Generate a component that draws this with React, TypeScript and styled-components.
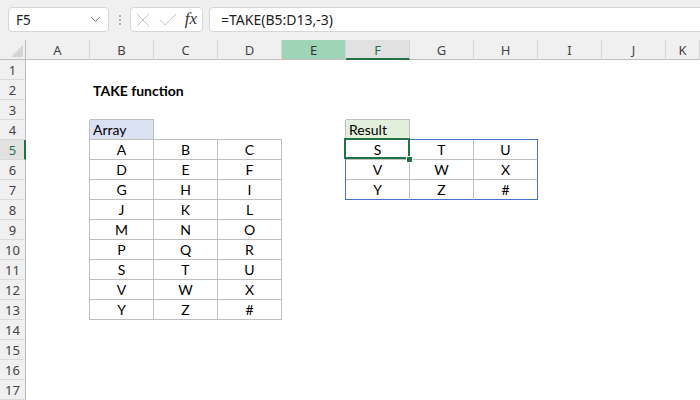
import React from 'react';
import styled, { createGlobalStyle, css } from 'styled-components';
import { ChevronDown, X, Check } from 'lucide-react';

const GREEN = '#217346';
const GRID = '#bfbfbf';
const BLUE = '#4472c4';
const HEAD_BG = '#f0f0f0';

const GlobalStyle = createGlobalStyle`
  html, body { margin: 0; padding: 0; background: #fff; overflow: hidden; }
  body { width: 700px; height: 400px; }
`;

const Window = styled.div`
  width: 700px;
  height: 400px;
  display: flex;
  flex-direction: column;
  overflow: hidden;
  background: #fff;
`;

const FormulaBar = styled.div`
  flex: none;
  height: 40px;
  box-sizing: border-box;
  padding: 7px 0 0 8px;
  display: flex;
  align-items: flex-start;
  background: ${HEAD_BG};
  font-family: "Noto Sans", "Open Sans", sans-serif;
  color: #222;
`;

const NameBox = styled.div`
  width: 101px;
  height: 25px;
  box-sizing: border-box;
  border: 1px solid #d6d6d6;
  border-radius: 4px;
  background: #fff;
  display: flex;
  align-items: center;
  justify-content: space-between;
  padding: 0 5px 0 7px;
  font-size: 13.5px;
`;

const Grip = styled.div`
  width: 21px;
  height: 25px;
  display: flex;
  flex-direction: column;
  align-items: center;
  justify-content: center;
  gap: 2px;
`;

const GripDot = styled.span`
  width: 2px;
  height: 2px;
  border-radius: 1px;
  background: #9a9a9a;
`;

const FxBox = styled.div`
  width: 73px;
  height: 25px;
  box-sizing: border-box;
  border: 1px solid #d6d6d6;
  border-radius: 4px;
  background: #fff;
  display: flex;
  align-items: center;
  padding: 0 5px 0 0;
  gap: 1px;
  color: #bdbdbd;

  & > svg {
    flex: none;
  }
`;

const FxLabel = styled.span`
  margin-left: auto;
  font-family: "Liberation Serif", "DejaVu Serif", serif;
  font-style: italic;
  font-size: 17px;
  color: #333;
  line-height: 1;
  padding-bottom: 2px;
`;

const FormulaInput = styled.div`
  flex: 1;
  height: 25px;
  margin-left: 6px;
  margin-right: -8px;
  box-sizing: border-box;
  border: 1px solid #d6d6d6;
  border-radius: 4px;
  background: #fff;
  display: flex;
  align-items: center;
  padding-left: 11px;
  font-size: 14px;
  white-space: nowrap;
`;

const Sheet = styled.div`
  flex: 1;
  display: grid;
  grid-template-columns: 26px repeat(10, 64px) 1fr;
  grid-auto-rows: 20px;
  font-family: Lato, "Open Sans", sans-serif;
`;

const Corner = styled.div`
  background: ${HEAD_BG};
  border-right: 1px solid #bdbdbd;
  border-bottom: 1px solid #bdbdbd;
  box-sizing: border-box;
  display: flex;
  align-items: flex-end;
  justify-content: flex-end;
  padding: 0 2px 2px 0;
`;

const CornerTriangle = styled.span`
  width: 0;
  height: 0;
  border-left: 12px solid transparent;
  border-bottom: 12px solid #d4d4d4;
`;

type HeadState = 'none' | 'active' | 'spill';

const ColHeader = styled.div<{ $state: HeadState }>`
  box-sizing: border-box;
  background: ${HEAD_BG};
  border-right: 1px solid #d6d6d6;
  border-bottom: 1px solid #bdbdbd;
  display: flex;
  align-items: center;
  justify-content: center;
  font-family: "Noto Sans", "Open Sans", sans-serif;
  font-size: 13px;
  color: #444;
  overflow: hidden;
  ${(p) =>
    p.$state === 'active' &&
    css`
      background: #e1e1e1;
      border-bottom: 2px solid ${GREEN};
      color: ${GREEN};
      padding-top: 1px;
    `}
  ${(p) =>
    p.$state === 'spill' &&
    css`
      background: #9fd5b7;
      color: #333;
    `}
`;

const RowHeader = styled.div<{ $active: boolean }>`
  box-sizing: border-box;
  background: ${HEAD_BG};
  border-right: 1px solid #bdbdbd;
  border-bottom: 1px solid #dadada;
  display: flex;
  align-items: center;
  justify-content: center;
  font-family: "Noto Sans", "Open Sans", sans-serif;
  font-size: 13px;
  color: #444;
  ${(p) =>
    p.$active &&
    css`
      background: #e1e1e1;
      border-right: 2px solid ${GREEN};
      color: ${GREEN};
      padding-left: 1px;
    `}
`;

const Cell = styled.div<{
  $fill?: string;
  $align?: 'left' | 'center';
  $bold?: boolean;
  $right?: string;
  $bottom?: string;
  $selected?: boolean;
}>`
  position: ${(p) => (p.$selected ? 'relative' : 'static')};
  box-sizing: border-box;
  min-width: 0;
  display: flex;
  align-items: center;
  justify-content: ${(p) => (p.$align === 'left' ? 'flex-start' : 'center')};
  padding: 0 3px;
  white-space: nowrap;
  overflow: visible;
  font-size: 14px;
  font-weight: ${(p) => (p.$bold ? 700 : 400)};
  color: #000;
  background: ${(p) => p.$fill ?? 'transparent'};
  border-right: ${(p) => (p.$right ? `1px solid ${p.$right}` : 'none')};
  border-bottom: ${(p) => (p.$bottom ? `1px solid ${p.$bottom}` : 'none')};
`;

const Selection = styled.span`
  position: absolute;
  top: -2px;
  left: -2px;
  right: -1px;
  bottom: 0;
  border: 2px solid ${GREEN};
  z-index: 2;
  pointer-events: none;
`;

const FillHandle = styled.span`
  position: absolute;
  right: -4px;
  bottom: -4px;
  width: 5px;
  height: 5px;
  background: ${GREEN};
  border: 1px solid #fff;
  z-index: 3;
`;

type Spec = {
  text?: string;
  fill?: string;
  align?: 'left' | 'center';
  bold?: boolean;
  right?: string;
  bottom?: string;
  selected?: boolean;
};

const COLS = ['A', 'B', 'C', 'D', 'E', 'F', 'G', 'H', 'I', 'J', 'K'];
const ROWS = Array.from({ length: 17 }, (_, i) => i + 1);

const arrayData = [
  ['A', 'B', 'C'],
  ['D', 'E', 'F'],
  ['G', 'H', 'I'],
  ['J', 'K', 'L'],
  ['M', 'N', 'O'],
  ['P', 'Q', 'R'],
  ['S', 'T', 'U'],
  ['V', 'W', 'X'],
  ['Y', 'Z', '#'],
];

const resultData = [
  ['S', 'T', 'U'],
  ['V', 'W', 'X'],
  ['Y', 'Z', '#'],
];

function cellSpec(r: number, c: number): Spec {
  const s: Spec = {};
  if (r === 2 && c === 1) {
    s.text = 'TAKE function';
    s.bold = true;
    s.align = 'left';
  }
  // Array table: header B4, data B5:D13
  if (r === 3 && c === 1) s.bottom = GRID;
  if (r === 4 && c === 0) s.right = GRID;
  if (r === 4 && c === 1) {
    s.text = 'Array';
    s.align = 'left';
    s.fill = '#d9e1f2';
    s.right = GRID;
    s.bottom = GRID;
  }
  if (r === 4 && (c === 2 || c === 3)) s.bottom = GRID;
  if (r >= 5 && r <= 13 && c === 0) s.right = GRID;
  if (r >= 5 && r <= 13 && c >= 1 && c <= 3) {
    s.text = arrayData[r - 5][c - 1];
    s.right = GRID;
    s.bottom = GRID;
  }
  // Result table: header F4, spill F5:H7
  if (r === 3 && c === 5) s.bottom = GRID;
  if (r === 4 && c === 4) s.right = GRID;
  if (r === 4 && c === 5) {
    s.text = 'Result';
    s.align = 'left';
    s.fill = '#e2efda';
    s.right = GRID;
    s.bottom = BLUE;
  }
  if (r === 4 && (c === 6 || c === 7)) s.bottom = BLUE;
  if (r >= 5 && r <= 7 && c === 4) s.right = BLUE;
  if (r >= 5 && r <= 7 && c >= 5 && c <= 7) {
    s.text = resultData[r - 5][c - 5];
    s.right = c === 7 ? BLUE : GRID;
    s.bottom = r === 7 ? BLUE : GRID;
  }
  if (r === 5 && c === 5) s.selected = true;
  return s;
}

export default function App() {
  return (
    <>
      <GlobalStyle />
      <Window>
        <FormulaBar>
          <NameBox>
            <span>F5</span>
            <ChevronDown size={15} strokeWidth={1.4} color="#555" />
          </NameBox>
          <Grip>
            <GripDot />
            <GripDot />
            <GripDot />
          </Grip>
          <FxBox>
            <X size={24} strokeWidth={0.9} />
            <Check size={24} strokeWidth={0.9} />
            <FxLabel>fx</FxLabel>
          </FxBox>
          <FormulaInput>=TAKE(B5:D13,-3)</FormulaInput>
        </FormulaBar>
        <Sheet>
          <Corner>
            <CornerTriangle />
          </Corner>
          {COLS.map((col) => (
            <ColHeader
              key={col}
              $state={col === 'F' ? 'active' : col === 'E' ? 'spill' : 'none'}
            >
              {col}
            </ColHeader>
          ))}
          {ROWS.map((r) => (
            <React.Fragment key={r}>
              <RowHeader $active={r === 5}>{r}</RowHeader>
              {COLS.map((col, c) => {
                const s = cellSpec(r, c);
                return (
                  <Cell
                    key={col}
                    $fill={s.fill}
                    $align={s.align}
                    $bold={s.bold}
                    $right={s.right}
                    $bottom={s.bottom}
                    $selected={s.selected}
                  >
                    {s.text}
                    {s.selected && (
                      <>
                        <Selection />
                        <FillHandle />
                      </>
                    )}
                  </Cell>
                );
              })}
            </React.Fragment>
          ))}
        </Sheet>
      </Window>
    </>
  );
}
